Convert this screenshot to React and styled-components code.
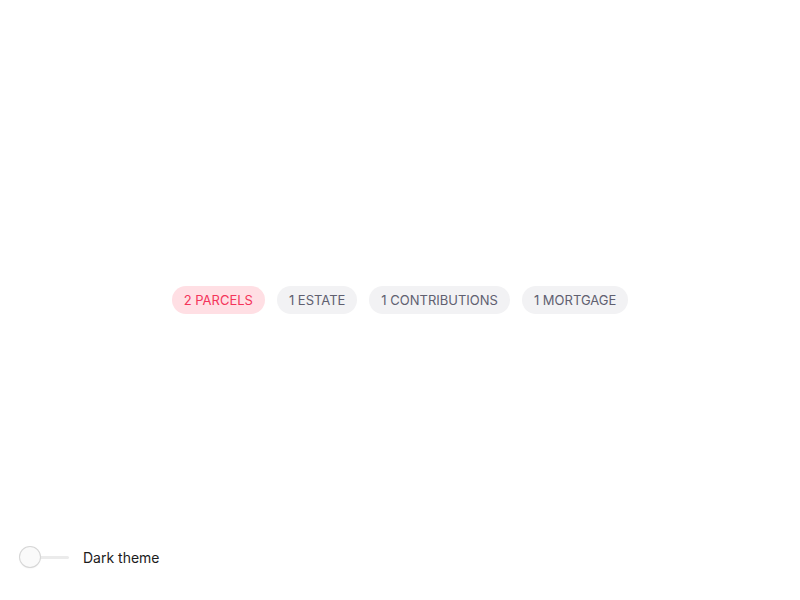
import React, { useState } from "react";
import styled, { createGlobalStyle } from "styled-components";

const Global = createGlobalStyle`
  html, body { margin: 0; padding: 0; background: #fff; }
  body { font-family: Inter, "Noto Sans", sans-serif; -webkit-font-smoothing: antialiased; }
`;

const Page = styled.div`
  height: 100vh;
  display: grid;
  grid-template-rows: 1fr auto 1fr;
`;

const ChipRow = styled.div`
  display: flex;
  justify-content: center;
  gap: 12px;
`;

const Chip = styled.button`
  height: 28px;
  padding: 0 12px;
  border: none;
  border-radius: 14px;
  font-family: Inter, sans-serif;
  font-size: 13px;
  letter-spacing: 0;
  text-transform: uppercase;
  cursor: pointer;
  background: ${(p) => (p.$active ? "#ffdfe4" : "#f2f2f4")};
  color: ${(p) => (p.$active ? "#f4345a" : "#606070")};
`;

const Footer = styled.div`
  align-self: end;
  display: flex;
  align-items: center;
  gap: 14px;
  padding: 0 0 32px 20px;
`;

const Switch = styled.label`
  position: relative;
  width: 49px;
  height: 22px;
  display: flex;
  align-items: center;
  cursor: pointer;
`;

const Track = styled.span`
  width: 100%;
  height: 3px;
  border-radius: 2px;
  background: #ebebeb;
`;

const Knob = styled.span`
  position: absolute;
  left: ${(p) => (p.$on ? "28px" : "0")};
  top: 1px;
  width: 20px;
  height: 20px;
  border-radius: 50%;
  background: #fafafa;
  box-shadow: 0 0 0 1px #d6d6d6, 0 1px 2px rgba(0,0,0,0.12);
`;

const Label = styled.span`
  font-size: 14px;
  color: #1c1c1c;
`;

export default function App() {
  const [dark, setDark] = useState(false);
  const [active, setActive] = useState(0);
  const chips = ["2 Parcels", "1 Estate", "1 Contributions", "1 Mortgage"];
  return (
    <>
      <Global />
      <Page>
        <div />
        <ChipRow>
          {chips.map((c, i) => (
            <Chip key={c} $active={i === active} onClick={() => setActive(i)}>
              {c}
            </Chip>
          ))}
        </ChipRow>
        <Footer>
          <Switch onClick={() => setDark(!dark)}>
            <Track />
            <Knob $on={dark} />
          </Switch>
          <Label>Dark theme</Label>
        </Footer>
      </Page>
    </>
  );
}
